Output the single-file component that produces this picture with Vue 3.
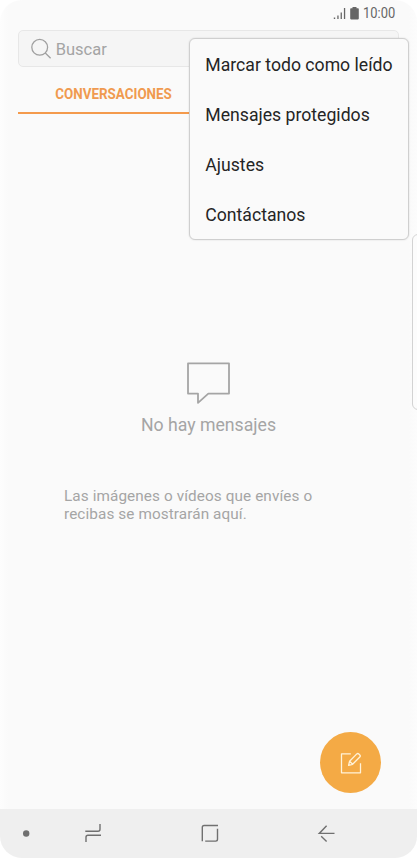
<script setup>
const menu = ['Marcar todo como leído', 'Mensajes protegidos', 'Ajustes', 'Contáctanos']
</script>

<template>
  <div class="phone">
    <header class="status">
      <svg class="signal" width="13" height="13" viewBox="0 0 13 13">
        <path d="M.8 10.500h1.400v1.500H.8zM4.300 8.500h1.300V12H4.300zM7.600 5.500h1.300V12H7.600zM10.900 1h1.300v11h-1.300z" />
      </svg>
      <svg class="battery" width="9" height="13" viewBox="0 0 9 13">
        <path d="M2.500 0h4v1.300H8q.8 0 .8.8v9.500q0 .8-.8.8H1q-.8 0-.8-.8V2.100q0-.8.8-.8h1.500z" />
      </svg>
      <span class="clock">10:00</span>
    </header>
    <div class="search">
      <svg width="21" height="21" viewBox="0 0 21 21">
        <circle cx="8.700" cy="9.300" r="7.900" />
        <path d="M14.300 15l5.300 5.300" />
      </svg>
      <span>Buscar</span>
    </div>
    <nav class="tabs">
      <div class="tab"><span>CONVERSACIONES</span></div>
    </nav>
    <main class="empty">
      <svg width="45" height="43" viewBox="0 0 45 43">
        <path d="M2 2.400h41v30.200H22.300L12 41.800V32.600H2z" />
      </svg>
      <h1>No hay mensajes</h1>
      <p>Las imágenes o vídeos que envíes o<br />recibas se mostrarán aquí.</p>
    </main>
    <footer class="navbar">
      <svg width="417" height="48" viewBox="0 0 417 48">
        <circle cx="26.200" cy="24.500" r="3.200" />
        <path d="M85.300 22.300h12.700q2 0 2-2v-5.300M101 26.200H88q-2 0-2 2V33" />
        <path d="M202.300 32.300V18.300q0-1.800 1.800-1.800H218M217.500 19.800V30.300q0 1.800-1.800 1.800h-10.500" />
        <path d="M334.500 24.400h-15.200l7.300-7.700M321.200 27.200l5.400 5.300" />
      </svg>
    </footer>
    <div class="edge"></div>
    <button class="compose" aria-label="Redactar">
      <svg width="22" height="22" viewBox="0 0 22 22">
        <path d="M10.800 1.900H1.500v18.900h19v-9.600" />
        <path d="M8.600 13.300l1-4.100 7.200-7.300q1-.9 2 .1l1 1q1 1 0 2l-7.200 7.300zM9.600 9.200l3 3.100" />
      </svg>
    </button>
    <div class="menu">
      <div v-for="item in menu" :key="item" class="item">{{ item }}</div>
    </div>
  </div>
</template>

<style>
body { background: #fff; }
</style>

<style scoped>
.phone {
  position: relative;
  display: flex;
  flex-direction: column;
  box-sizing: border-box;
  width: 417px;
  height: 858px;
  overflow: hidden;
  border-radius: 22px;
  background: linear-gradient(90deg, #fdfdfd 0, #fafafa 8px, #fafafa 409px, #fcfcfc 417px);
  font-family: Roboto, sans-serif;
}
.status {
  display: flex;
  align-items: center;
  height: 26px;
  padding-left: 333px;
  color: #666;
}
.status svg { flex: none; fill: #666; }
.battery { margin-left: 4px; }
.clock {
  margin-left: 4px;
  padding-top: 2px;
  font-size: 14.500px;
  line-height: 24px;
  transform: scaleX(.89);
  transform-origin: left;
}
.search {
  display: flex;
  align-items: center;
  box-sizing: border-box;
  height: 37px;
  margin: 4px 18px 0;
  padding-left: 12px;
  border: 1px solid #e7e7e7;
  border-radius: 5px;
  background: #f5f5f5;
  color: #a4a4a4;
  font-size: 16.500px;
}
.search svg { fill: none; stroke: #a0a0a0; stroke-width: 1.300; }
.search span { margin-left: 3.700px; padding-top: 1px; }
.tabs { display: flex; margin: 0 18px; }
.tab {
  display: flex;
  justify-content: center;
  box-sizing: border-box;
  width: 191px;
  height: 47px;
  border-bottom: 2px solid #f49a4c;
  color: #f09a50;
  font-size: 15.300px;
  font-weight: 700;
  line-height: 54px;
}
.tab span { transform: scaleX(.875); }
.empty {
  flex: 1;
  display: flex;
  flex-direction: column;
  align-items: center;
  padding-top: 247px;
  color: #a5a5a5;
}
.empty svg { fill: none; stroke: #a5a5a5; stroke-width: 1.800; stroke-linejoin: round; }
h1 {
  margin: 9px 0 0;
  font-size: 17.700px;
  font-weight: 400;
  line-height: 24px;
}
p {
  align-self: flex-start;
  margin: 50px 0 0 64px;
  font-size: 15.300px;
  line-height: 18px;
  letter-spacing: .1px;
  white-space: nowrap;
}
.navbar { height: 49px; background: #efefef; }
.navbar svg { display: block; fill: none; stroke: #707070; stroke-width: 1.400; }
.navbar circle { fill: #707070; stroke: none; }
.edge {
  position: absolute;
  top: 234px;
  left: 412px;
  box-sizing: border-box;
  width: 14px;
  height: 176px;
  border: 1px solid #d3d3d3;
  border-radius: 6px;
  background: #fcfcfc;
}
.compose {
  position: absolute;
  top: 732px;
  left: 320px;
  display: flex;
  align-items: center;
  justify-content: center;
  width: 61px;
  height: 61px;
  padding: 0;
  border: 0;
  border-radius: 50%;
  background: #f4aa45;
}
.compose svg { fill: none; stroke: #fff2d8; stroke-width: 1.300; stroke-linejoin: round; }
.menu {
  position: absolute;
  top: 38px;
  left: 189px;
  box-sizing: border-box;
  width: 220px;
  height: 202px;
  padding-top: 1px;
  border: 1px solid #cfcfcf;
  border-radius: 6px;
  background: #fafafa;
  box-shadow: 0 0 2px #0002;
}
.item {
  padding-left: 15.300px;
  color: #252525;
  font-size: 17.650px;
  line-height: 50px;
  white-space: nowrap;
}
</style>
